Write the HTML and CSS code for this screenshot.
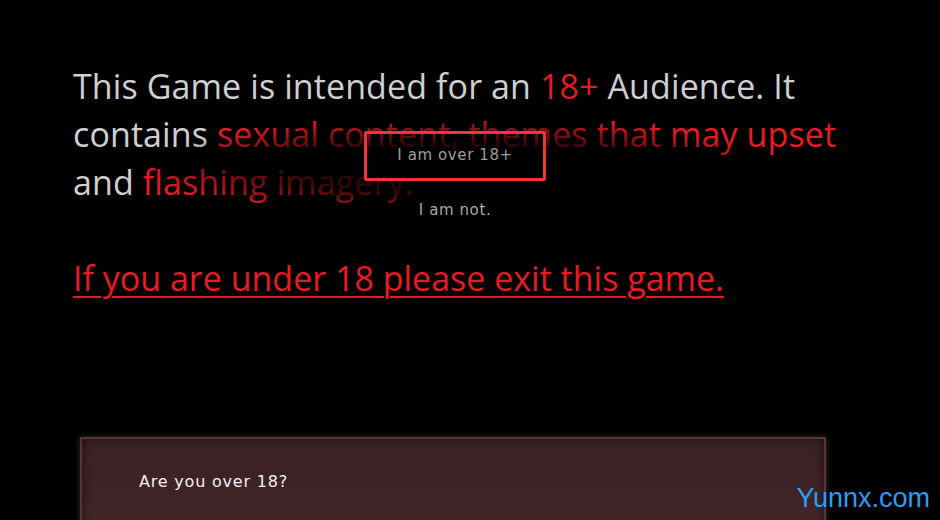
FILE: index.html
```html
<!DOCTYPE html>
<html lang="en">
<head>
  <meta charset="UTF-8">
  <title>Age Warning</title>
  <link rel="stylesheet" href="styles.css">
</head>
<body>
  <div class="screen">
    <div class="warning">
      <p class="notice">This Game is intended for an <span class="red">18+</span> Audience. It contains <span class="red">sexual content, themes that may upset</span> and <span class="red">flashing imagery.</span></p>
      <p class="exit"><a href="#">If you are under 18 please exit this game.</a></p>
    </div>

    <div class="menu">
      <div class="shade"></div>
      <button class="choice selected">I am over 18+</button>
      <button class="choice">I am not.</button>
    </div>

    <div class="dialog">
      <div class="question">Are you over 18?</div>
    </div>

    <div class="watermark">Yunnx.com</div>
  </div>
</body>
</html>
```

FILE: styles.css
```css
html, body {
  margin: 0;
  background-color: #000;
}
.screen {
  position: relative;
  width: 940px;
  height: 520px;
  overflow: hidden;
  font-family: "Open Sans", sans-serif;
}
.warning {
  padding: 62px 0 0 73px;
  width: 775px;
}
.notice {
  margin: 0;
  font-size: 34px;
  line-height: 48px;
  color: #cfcfcf;
  letter-spacing: 0.1px;
}
.red {
  color: #e81b25;
}
.exit {
  margin: 48px 0 0;
  font-size: 34px;
  line-height: 48px;
}
.exit a {
  color: #e81b25;
  text-decoration: underline;
  text-underline-offset: 5px;
  text-decoration-thickness: 2px;
}
.menu {
  position: absolute;
  left: 364px;
  top: 131px;
  width: 182px;
  display: flex;
  flex-direction: column;
  align-items: center;
}
.shade {
  position: absolute;
  left: -224px;
  top: -23px;
  width: 640px;
  height: 120px;
  background: radial-gradient(ellipse 320px 52px at 50% 50%, rgba(0,0,0,0.92) 0%, rgba(0,0,0,0.78) 50%, rgba(0,0,0,0.35) 80%, rgba(0,0,0,0) 100%);
}
.choice {
  position: relative;
  background: none;
  border: 3px solid transparent;
  border-radius: 2px;
  color: #9c9c9c;
  font-family: "DejaVu Sans", sans-serif;
  font-size: 15px;
  letter-spacing: 0.6px;
  padding: 0;
  height: 50px;
  width: 182px;
  margin: 0;
  cursor: pointer;
}
.choice.selected {
  border-color: #f4333a;
  padding-bottom: 2px;
}
.choice + .choice {
  height: 34px;
  margin-top: 12px;
  color: #a8a8a8;
}
.dialog {
  position: absolute;
  left: 80px;
  top: 437px;
  width: 742px;
  height: 100px;
  background: linear-gradient(180deg, #3a2124, #432629);
  border: 2px solid #553538;
  box-shadow: 0 0 6px rgba(150, 110, 110, 0.4), inset 0 0 10px rgba(20, 5, 8, 0.7);
}
.question {
  padding: 33px 0 0 57px;
  color: #efefef;
  font-family: "DejaVu Sans", sans-serif;
  font-size: 16px;
  letter-spacing: 0.8px;
}
.watermark {
  position: absolute;
  right: 10px;
  top: 483px;
  color: #2c9cf5;
  font-family: "Liberation Sans", Arial, sans-serif;
  font-size: 27px;
}
```
